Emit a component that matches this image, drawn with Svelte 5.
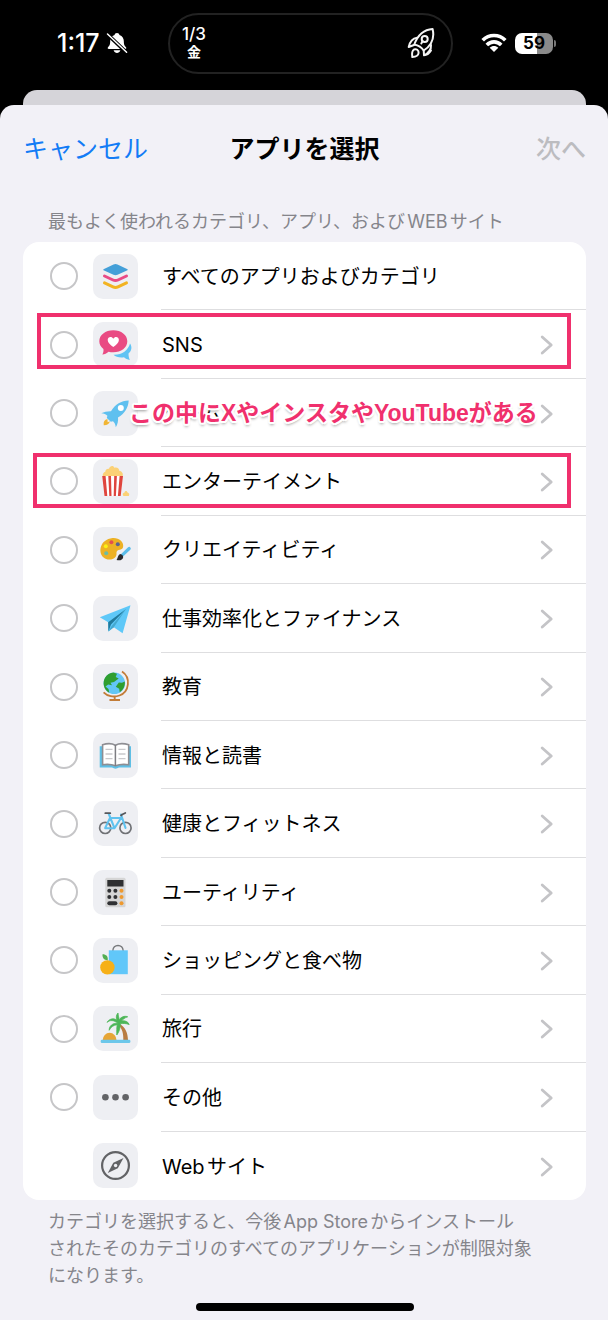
<script>
  const rows = [
    { id: 'all', label: 'すべてのアプリおよびカテゴリ', check: true, more: false },
    { id: 'sns', label: 'SNS', check: true, more: true, frame: 'frame-sns' },
    { id: 'games', label: 'ゲーム', check: true, more: true, note: 'この中にXやインスタやYouTubeがある' },
    { id: 'entertainment', label: 'エンターテイメント', check: true, more: true, frame: 'frame-entertainment' },
    { id: 'creativity', label: 'クリエイティビティ', check: true, more: true },
    { id: 'productivity', label: '仕事効率化とファイナンス', check: true, more: true },
    { id: 'education', label: '教育', check: true, more: true },
    { id: 'reading', label: '情報と読書', check: true, more: true },
    { id: 'health', label: '健康とフィットネス', check: true, more: true },
    { id: 'utilities', label: 'ユーティリティ', check: true, more: true },
    { id: 'shopping', label: 'ショッピングと食べ物', check: true, more: true },
    { id: 'travel', label: '旅行', check: true, more: true },
    { id: 'other', label: 'その他', check: true, more: true },
    { id: 'web', label: 'Webサイト', check: false, more: true }
  ];
</script>

{#snippet icon(id)}
  <svg viewBox="0 0 45 45" aria-hidden="true">
    {#if id === 'all'}
      <path d="M10.5 15.2 L20.5 10.5 Q22.5 9.5 24.5 10.5 L34.5 15.2 Q35 15.7 34.5 16.2 L24.5 20.8 Q22.5 21.5 20.5 20.8 L10.5 16.2 Q10 15.7 10.5 15.2Z" fill="#439fd8" />
      <path d="M11.5 22 L20 26 Q22.5 27.2 25 26 L33.5 22" fill="none" stroke="#e94b86" stroke-width="3" stroke-linecap="round" />
      <path d="M11.5 28.8 L20 32.8 Q22.5 34 25 32.8 L33.5 28.8" fill="none" stroke="#f2b321" stroke-width="3" stroke-linecap="round" />
    {:else if id === 'sns'}
      <path d="M37 21.5 C39.5 25 38.5 29 35.5 31.5 C35.5 34 36 36 36.8 38 C34.5 37.5 32.5 36.5 31 35.2 C27 36 23 35 20.5 32.7 C29 33 35 28.5 37 21.5Z" fill="#60c3f3" />
      <path d="M20.3 8.3 C28.2 8.3 34.3 13 34.3 19.3 C34.3 25.8 28.2 30.3 20.3 30.3 C18.6 30.3 17 30.1 15.6 29.7 C13.8 31.3 11.7 32.3 9.3 32.6 C10.4 30.7 10.7 28.8 10.4 27 C7.8 25 6.3 22.4 6.3 19.3 C6.3 13 12.4 8.3 20.3 8.3Z" fill="#e94b83" />
      <path d="M20.3 25 C17.5 23 14.7 20.7 14.7 18 C14.7 14.8 18.7 14 20.3 16.8 C21.9 14 25.9 14.8 25.9 18 C25.9 20.7 23.1 23 20.3 25Z" fill="#fff" />
    {:else if id === 'games'}
      <path d="M35.7 9.4 C28 9.7 22.5 13 18 20.2 C14.5 20.1 11 20.8 8.3 22.2 C11 22.4 12.9 23.2 14.4 24.8 L13.8 27 L17.8 30.8 L20 30.2 C21.7 31.8 22.5 33.5 22.8 36.3 C24.7 33 25.4 29.7 25 26.4 C31.8 22.2 35.2 17 35.7 9.4Z" fill="#5fc0ef" />
      <circle cx="27.8" cy="17" r="3" fill="#fff" />
      <path d="M14.4 28 C11.5 28.7 10.3 30.7 10.7 34.2 C14 34.3 16.3 33 16.9 30.2 L14.7 31.3Z" fill="#f1b534" />
    {:else if id === 'entertainment'}
      <path d="M9.8 17.5 C9.3 14.5 10.8 13.3 12.3 12.8 C12.3 10.5 14.5 9.3 16 9.8 C17 6.2 20.8 6.5 21.3 8.8 C24 7.8 26.5 9.5 26.2 11.7 C29.5 12.2 30.5 15 29.5 17.5Z" fill="#fbd176" />
      <path d="M9.2 17 H30 L27.7 37 H11.5Z" fill="#fff" />
      <path d="M9.2 17 H12.6 L14.3 37 H11.5Z M15.3 17 H18 L18.5 37 H16.3Z M21.2 17 H23.9 L22.9 37 H20.7Z M26.6 17 H30 L27.7 37 H24.9Z" fill="#df453e" />
      <path d="M30.5 37 C29 35 30.2 33.8 31.4 33.8 C31.6 31.8 34 31.5 34.3 33.3 C36.2 34 36.8 35.5 35.8 37Z" fill="#fbd176" />
    {:else if id === 'creativity'}
      <path d="M19.5 11 C26 10.5 30.5 14.5 30.2 19 C30 23.5 26 22.2 24.3 23.8 C22.5 25.5 24.7 27.5 22.3 30.2 C19.5 33.4 13.5 33.3 10.3 30.3 C4.8 25 7 12.5 19.5 11Z" fill="#edb124" />
      <circle cx="18.4" cy="15.2" r="2" fill="#e5504d" />
      <circle cx="24.8" cy="17.2" r="2" fill="#5b6490" />
      <circle cx="12.8" cy="19.3" r="2" fill="#fbf014" />
      <circle cx="13.2" cy="26.3" r="2" fill="#6bbda5" />
      <path d="M36.2 21.5 L29.5 27.8" stroke="#5bbdea" stroke-width="3.2" stroke-linecap="round" />
      <path d="M27.3 27 C29 27.3 30.2 28.5 30.2 30.2 C29.5 33.3 26.7 33.7 23.5 32.9 C25.2 31 24.4 28.3 27.3 27Z" fill="#29292c" />
    {:else if id === 'productivity'}
      <path d="M37.5 9.2 L6.8 21.3 L15.2 26.3 L15.4 35.4 L20.8 31.2 L29.6 37.2Z" fill="#5ec8f8" />
      <path d="M33 13 L15.2 26.3 L15.4 35.4 L18 28.5Z" fill="#207a9d" />
      <path d="M33 13 L18.8 29.7 L15.4 35.4 L20.8 31.2Z" fill="#45a8cf" />
    {:else if id === 'education'}
      <circle cx="21.3" cy="19.3" r="10.8" fill="#62c6f5" />
      <path d="M12.2 13.5 C14 10.5 17 8.7 20.5 8.5 L24 9.7 L22.7 13 L25.7 14.5 L21 18 L17.5 18.7 L19 21.3 L15.2 20.5 L12.5 22.5 L15.5 25 L16.3 28.8 C11 26 9 19 12.2 13.5Z M31.8 17.5 C32.3 21.8 30.3 26.3 26.7 28.2 L26.2 24.8 L22.8 22.7 L25.8 18.5 L29 18.8Z" fill="#2f9e2f" />
      <path d="M29 7.6 C38 13.5 36.5 27.8 26.5 31.5 C20.5 33.7 14.2 32 10.6 28.3 M21.7 32 V36 M16.5 36 H27" fill="none" stroke="#c27c38" stroke-width="1.8" />
    {:else if id === 'reading'}
      <path d="M6.7 13.3 H38 V34.5 H26 Q22.5 36.8 19 34.5 H6.7Z" fill="#5fbfe5" />
      <path d="M9.6 31.7 V11.8 Q17 9.3 22.4 12.2 Q27.8 9.3 35.7 11.8 V31.7 Q28 30.6 22.4 32.8 Q17 30.6 9.6 31.7Z" fill="#fff" stroke="#8e8e93" stroke-width="1.6" />
      <path d="M22.4 12 V33" stroke="#7d7d82" stroke-width="1.5" />
      <path d="M12.5 16.3 H19.5 M12.5 21 H19.5 M12.5 25.7 H19.5 M25.5 16.3 H32.5 M25.5 21 H32.5 M25.5 25.7 H32.5" stroke="#c9c9cc" stroke-width="1.3" />
    {:else if id === 'health'}
      <g fill="none" stroke-linecap="round" stroke-linejoin="round">
        <circle cx="12.2" cy="26.9" r="5.6" stroke="#6f7175" stroke-width="1.7" />
        <circle cx="32.5" cy="26.9" r="5.6" stroke="#6f7175" stroke-width="1.7" />
        <path d="M12.2 26.9 L17 17 H28 L21.5 27.2 H12.2 M15.8 13 L21.5 27.2 M28 13.5 L32.5 26.9" stroke="#5fc2ef" stroke-width="2.1" />
        <path d="M12.3 12.2 H17.3 M28 14.5 L29.2 13.5 L32.3 12" stroke="#55575b" stroke-width="1.8" />
      </g>
    {:else if id === 'utilities'}
      <rect x="12.3" y="7.8" width="20.2" height="29.4" rx="1.5" fill="#d5d5d5" />
      <rect x="14.3" y="10" width="16.2" height="6.5" fill="#2e2f31" />
      <g fill="#303134">
        <circle cx="16.3" cy="20.8" r="2" /><circle cx="22.4" cy="20.8" r="2" />
        <circle cx="16.3" cy="27" r="2" /><circle cx="22.4" cy="27" r="2" />
        <rect x="14.3" y="31.2" width="10.1" height="4" rx="2" />
      </g>
      <g fill="#ee992f"><circle cx="28.5" cy="20.8" r="2" /><circle cx="28.5" cy="27" r="2" /><circle cx="28.5" cy="33.2" r="2" /></g>
    {:else if id === 'shopping'}
      <path d="M19.8 13 C19.8 5.6 30.2 5.6 30.2 13" fill="none" stroke="#76787b" stroke-width="1.5" />
      <rect x="15.8" y="12.3" width="19" height="23.9" fill="#61c7f9" />
      <circle cx="14.4" cy="29.4" r="7.2" fill="#f6b018" />
      <path d="M14.7 22.2 C10.8 22 9.2 19.5 9.5 16.2 C13.3 16.2 15.3 18.5 14.7 22.2Z" fill="#52ad51" />
    {:else if id === 'travel'}
      <path d="M25.5 19 C29.5 23 30.5 28 30.3 34 H35 C34.8 27 32.5 21.5 27 18Z" fill="#b97c42" />
      <path d="M9.7 34 A6.9 7.2 0 0 1 23.5 34Z" fill="#e6a536" />
      <path d="M24.8 17.3 C21 14 17 13.7 14 16.4 C17 12.2 21 12 24 14.3 C22.8 11.5 23.2 9 25 7 C25.2 10 26 12 26.2 13.7 C28 11 31.5 9.5 34.7 10.8 C31.5 11.8 29.8 13.5 28.5 15 C32 14.3 35 15.5 36.2 18.5 C33 17.3 30 17.2 27.3 17.8 C27.3 21.5 26.5 25.5 23.8 29 C23.7 25 23.7 21.5 24.2 18.7 C20.5 19 17.8 21 16.2 24.3 C16 20.2 19.5 16.8 24.8 17.3Z" fill="#4db658" stroke="#4db658" stroke-width=".8" />
      <rect x="7.7" y="33.7" width="29.7" height="3.4" rx="1.3" fill="#6cc7ea" />
    {:else if id === 'other'}
      <g fill="#626366"><circle cx="12.4" cy="22.3" r="3.3" /><circle cx="22.5" cy="22.3" r="3.3" /><circle cx="32.6" cy="22.3" r="3.3" /></g>
    {:else}
      <circle cx="22.5" cy="22.5" r="13.4" fill="none" stroke="#626366" stroke-width="2.2" />
      <path d="M30.5 15 L24.8 25.2 L14.8 30 L20.3 19.8Z" fill="#626366" />
      <circle cx="22.6" cy="22.5" r="1.7" fill="#eeeff3" />
    {/if}
  </svg>
{/snippet}

<div class="phone">
  <header class="status">
    <div class="clock">
      <span>1:17</span>
      <svg width="22" height="22" viewBox="0 0 22 22" aria-hidden="true">
        <path d="M11 1 C12.5 1 13.2 1.8 13.5 2.9 C16.5 4 17.8 6.3 17.8 9 C17.8 13 18.8 14 20 15.3 C20.8 16.3 20 17 19.2 17 H2.8 C2 17 1.2 16.3 2 15.3 C3.2 14 4.2 13 4.2 9 C4.2 6.3 5.5 4 8.5 2.9 C8.8 1.8 9.5 1 11 1Z M7.6 18.3 H14.4 C13.8 20.2 12.4 21 11 21 C9.6 21 8.2 20.2 7.6 18.3Z" fill="#fff" />
        <path d="M1.8 2.6 L20.6 20.6" stroke="#000" stroke-width="3.6" />
        <path d="M1.5 2 L20.6 20.3" stroke="#fff" stroke-width="1.5" stroke-linecap="round" />
      </svg>
    </div>
    <div class="island">
      <div class="date"><span>1/3</span><b>金</b></div>
      <svg width="28" height="32" viewBox="0 0 28 32" fill="none" stroke="#f4f4f4" stroke-width="2" stroke-linejoin="round" stroke-linecap="round" aria-hidden="true">
        <path d="M25.6 2 C17.5 2.5 11 7.5 7.3 17.5 C10.5 18.2 15 21 16.7 23.5 C24.5 18.5 27.7 11 25.6 2Z" />
        <path d="M10 10.8 C5 11.5 3 14.5 1.7 20 L7 18 M24 18 C24.3 23 22 26 17 28.3 L16.7 23.5 M17.5 27.8 C19.5 28.3 22 26.5 24 23.5" />
        <circle cx="17.7" cy="12" r="3" /><path d="M15.6 14.2 L14.3 16.5" />
        <path d="M7 22.5 C4.7 24 4.8 27 5.3 30 C8.8 29.8 11.3 28.5 11.6 26 C11.8 23 9.3 21.5 7 22.5Z" />
      </svg>
    </div>
    <div class="signals">
      <svg width="26" height="20" viewBox="0 0 26 20" aria-hidden="true">
        <g fill="none" stroke="#fff" stroke-width="3.7">
          <path d="M1.7 7.2 C8 .9 18 .9 24.3 7.2" />
          <path d="M5.8 12 C10 7.9 16 7.9 20.2 12" />
        </g>
        <path d="M8.7 14.8 C11.2 12.5 14.8 12.5 17.3 14.8 L13 19Z" fill="#fff" />
      </svg>
      <div class="battery"><span>59</span></div>
    </div>
  </header>

  <div class="backdrop"></div>

  <main class="sheet">
    <nav>
      <button class="cancel" type="button">キャンセル</button>
      <h1>アプリを選択</h1>
      <button class="next" type="button" disabled>次へ</button>
    </nav>

    <h2>最もよく使われるカテゴリ、アプリ、およびWEBサイト</h2>

    <ul class="card">
      {#each rows as row (row.id)}
        <li>
          {#if row.check}
            <input type="checkbox" id={row.id} />
          {:else}
            <span class="blank"></span>
          {/if}
          <span class="tile">{@render icon(row.id)}</span>
          <div class="content">
            {#if row.check}
              <label for={row.id}>{row.label}</label>
            {:else}
              <span class="label">{row.label}</span>
            {/if}
            {#if row.more}
              <button class="more" type="button" aria-label={row.label}>
                <svg width="14" height="20" viewBox="0 0 14 20" aria-hidden="true">
                  <path d="M2.2 2 L11.2 10 L2.2 18" fill="none" stroke="#c4c4c7" stroke-width="2.8" stroke-linecap="round" stroke-linejoin="round" />
                </svg>
              </button>
            {/if}
          </div>
          {#if row.frame}<span class="frame {row.frame}"></span>{/if}
          {#if row.note}<strong class="note">{row.note}</strong>{/if}
        </li>
      {/each}
    </ul>

    <p>カテゴリを選択すると、今後App Storeからインストール<br />されたそのカテゴリのすべてのアプリケーションが制限対象<br />になります。</p>

    <div class="home"></div>
  </main>
</div>

<style>
  :global(body) {
    background: #000;
  }
  .phone {
    display: flex;
    flex-direction: column;
    min-height: 100vh;
    background: #000;
    font-family: Inter, 'Noto Sans CJK JP', sans-serif;
    text-autospace: normal;
    color: #000;
  }
  .phone * {
    box-sizing: border-box;
  }
  button {
    padding: 0;
    border: 0;
    background: none;
    font: inherit;
  }
  svg {
    display: block;
    flex: none;
  }
  .status {
    display: grid;
    grid-template-columns: 168px 1fr 155px;
    align-items: center;
    height: 90px;
    padding-bottom: 4px;
    color: #fff;
  }
  .clock {
    display: flex;
    align-items: center;
    gap: 6px;
    padding-left: 57px;
    font-size: 25px;
    font-weight: 500;
    line-height: 28px;
  }
  .island {
    display: flex;
    align-items: center;
    justify-content: space-between;
    height: 61px;
    padding: 0 16px 0 12px;
    border: 2px solid #222;
    border-radius: 31px;
  }
  .date {
    display: flex;
    flex-direction: column;
    align-items: center;
    font-size: 17px;
    font-weight: 500;
    line-height: 18px;
  }
  .date b {
    font-size: 14px;
  }
  .signals {
    display: flex;
    align-items: center;
    gap: 8px;
    padding-left: 28px;
  }
  .battery {
    position: relative;
    width: 38px;
    height: 21px;
    border-radius: 7px;
    background: linear-gradient(90deg, #fff 59%, #8a8a8a 59%);
    color: #000;
    font-size: 17px;
    font-weight: 700;
    line-height: 21px;
    text-align: center;
  }
  .battery::after {
    content: '';
    position: absolute;
    top: 7px;
    right: -3px;
    width: 2px;
    height: 7px;
    border-radius: 0 2px 2px 0;
    background: #777;
  }
  .backdrop {
    height: 15px;
    margin: 0 22px 0 23px;
    border-radius: 14px 14px 0 0;
    background: #d5d4d9;
  }
  .sheet {
    display: flex;
    flex: 1;
    flex-direction: column;
    padding: 0 22px 9px 23px;
    border-radius: 14px 14px 0 0;
    background: #f2f1f7;
  }
  nav {
    display: grid;
    grid-template-columns: 1fr auto 1fr;
    align-items: center;
    height: 87px;
    font-size: 25px;
    line-height: 36px;
  }
  h1 {
    margin: 0;
    font-size: 25px;
    font-weight: 700;
  }
  .cancel {
    justify-self: start;
    color: #127cf6;
  }
  .next {
    justify-self: end;
    color: #bcbcc0;
    font-weight: 500;
  }
  h2 {
    margin: 16px 0 7px;
    padding-left: 25px;
    color: #85858b;
    font-size: 18px;
    font-weight: 400;
    line-height: 27px;
    white-space: nowrap;
  }
  .card {
    display: grid;
    flex: 1;
    grid-auto-rows: 1fr;
    margin: 0;
    padding: 0;
    border-radius: 16px;
    background: #fff;
    list-style: none;
  }
  li {
    position: relative;
    display: flex;
    align-items: center;
    padding-left: 27px;
  }
  input,
  .blank {
    flex: none;
    width: 28px;
    height: 28px;
    margin: 0 15px 0 0;
  }
  input {
    appearance: none;
    border: 2px solid #c6c6c8;
    border-radius: 50%;
  }
  input:checked {
    border: 8px solid #127cf6;
  }
  .tile {
    flex: none;
    width: 45px;
    height: 45px;
    margin-right: 23px;
    border-radius: 10px;
    background: #eeeff3;
  }
  .content {
    display: flex;
    flex: 1;
    align-items: center;
    align-self: stretch;
    justify-content: space-between;
    padding: 2px 32px 0 1px;
    border-bottom: 1px solid #dedee0;
    font-size: 20px;
    line-height: 30px;
  }
  li:last-child .content {
    border-bottom: 0;
  }
  .frame {
    position: absolute;
    border: 4px solid #f0306d;
    pointer-events: none;
  }
  .frame-sns {
    inset: 3px 15px 10px 14px;
  }
  .frame-entertainment {
    inset: 6px 15px 8px 10px;
  }
  .note {
    position: absolute;
    left: 106px;
    color: #f0306d;
    font-family: 'Liberation Sans', 'Noto Sans CJK JP', sans-serif;
    font-size: 23px;
    font-weight: 700;
    line-height: 34px;
    white-space: nowrap;
    text-autospace: no-autospace;
    text-shadow:
      1px 0 #fff,
      -1px 0 #fff,
      0 1px #fff,
      0 -1px #fff,
      2px 1px #fff,
      -2px 1px #fff,
      2px -1px #fff,
      -2px -1px #fff,
      1px 2px #fff,
      -1px 2px #fff,
      1px -2px #fff,
      -1px -2px #fff,
      0 3px 3px #999;
    pointer-events: none;
  }
  p {
    margin: 8px 0 0;
    padding-left: 25px;
    color: #85858b;
    font-size: 18px;
    line-height: 27px;
    white-space: nowrap;
  }
  .home {
    width: 218px;
    height: 8px;
    margin: 14px auto 0;
    border-radius: 4px;
    background: #000;
  }
</style>
